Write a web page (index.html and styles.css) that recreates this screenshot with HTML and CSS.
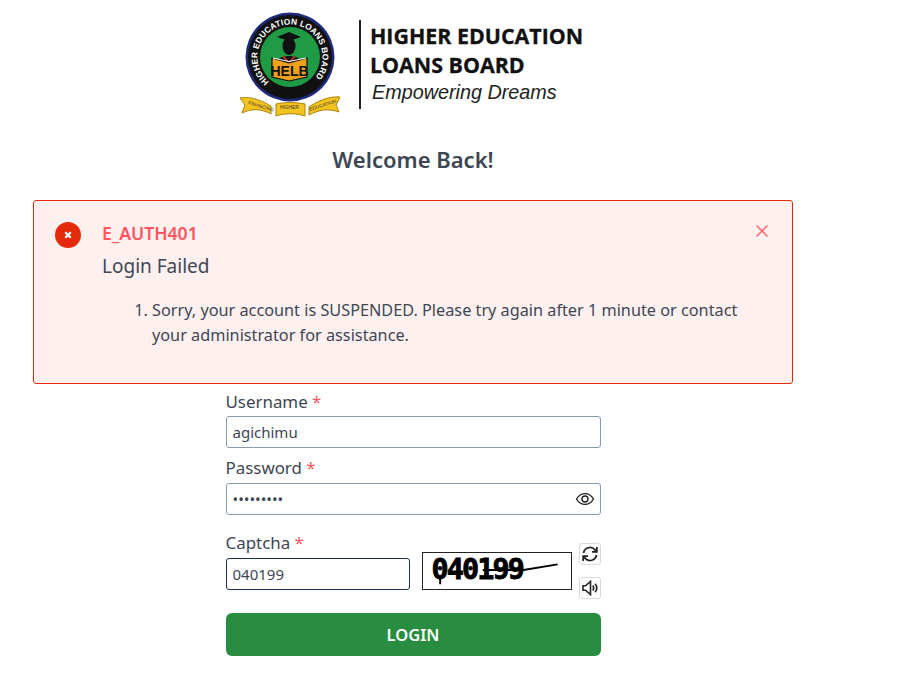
FILE: index.html
```html
<!DOCTYPE html>
<html lang="en">
<head>
    <meta charset="UTF-8">
    <meta name="viewport" content="width=device-width, initial-scale=1.0">
    <title>HELB Login</title>
    <link rel="stylesheet" href="styles.css">
</head>
<body>
<div class="page">
    <svg class="logo" width="350" height="120" viewBox="0 0 350 120" xmlns="http://www.w3.org/2000/svg">
        <defs>
            <path id="sealArc" d="M 29.1 81.9 A 32.5 32.5 0 1 1 70.9 81.9"/>
        </defs>
        <!-- seal -->
        <circle cx="50" cy="57" r="44.5" fill="#1f2a7a"/>
        <circle cx="50" cy="57" r="42" fill="#111"/>
        <circle cx="50" cy="57" r="30" fill="#1f9a45"/>
        <text class="seal-text" fill="#fff"><textPath href="#sealArc" textLength="152" lengthAdjust="spacing">HIGHER EDUCATION LOANS BOARD</textPath></text>
        <path d="M37 37 L49 32 L61 37 L49 41 Z" fill="#111"/>
        <ellipse cx="49" cy="46" rx="6.5" ry="9" fill="#111"/>
        <path d="M37 62 C39 54 59 54 61 62 L56 64 L49 68 L42 64 Z" fill="#111"/>
        <path d="M43 56 L49 63 L55 56" fill="none" stroke="#d8342c" stroke-width="1.6"/>
        <path d="M32 58 L49 63 L67 58 L67 77 L49 81 L32 77 Z" fill="#f0a11c" stroke="#111" stroke-width="1.2"/>
        <path d="M33 58 L49 61.5 L66 58" fill="none" stroke="#fff" stroke-width="1.2"/>
        <text class="seal-helb" x="49.5" y="76" text-anchor="middle">HELB</text>
        <!-- ribbon -->
        <path d="M0 98 C12 96 22 101 31 106 L31 114 C22 109 12 108 2 113 L5 105 Z" fill="#f5c31d" stroke="#a8840f" stroke-width="1"/>
        <path d="M36 104 C45 102 56 102 65 104 L65 116 C56 113 45 113 36 116 Z" fill="#f5c31d" stroke="#a8840f" stroke-width="1"/>
        <path d="M100 97 C89 96 78 101 69 107 L69 115 C78 110 88 108 99 112 L96 105 Z" fill="#f5c31d" stroke="#a8840f" stroke-width="1"/>
        <text class="ribbon-text" x="8" y="104" transform="rotate(17 8 104)">FINANCING</text>
        <text class="ribbon-text" x="40" y="109">HIGHER</text>
        <text class="ribbon-text" x="70" y="111" transform="rotate(-18 70 111)">EDUCATION</text>
        <!-- wordmark -->
        <rect x="119" y="20" width="2" height="89" fill="#222"/>
        <text class="logo-title" x="130" y="43.5">HIGHER EDUCATION</text>
        <text class="logo-title" x="130" y="72.5">LOANS BOARD</text>
        <text class="logo-tag" x="132" y="99">Empowering Dreams</text>
    </svg>

    <h1 class="welcome">Welcome Back!</h1>

    <div class="alert">
        <span class="alert-icon">
            <svg width="10" height="10" viewBox="0 0 10 10"><path d="M2.2 2.2 L7.8 7.8 M7.8 2.2 L2.2 7.8" stroke="#fff" stroke-width="2.2"/></svg>
        </span>
        <div class="alert-body">
            <div class="alert-code">E_AUTH401</div>
            <div class="alert-title">Login Failed</div>
            <ol class="alert-list">
                <li>Sorry, your account is SUSPENDED. Please try again after 1 minute or contact your administrator for assistance.</li>
            </ol>
        </div>
        <svg class="alert-close" width="14" height="14" viewBox="0 0 14 14"><path d="M1.5 1.5 L12.5 12.5 M12.5 1.5 L1.5 12.5" stroke="#ff5a5f" stroke-width="1.3"/></svg>
    </div>

    <form class="login-form">
        <label class="field-label" for="username">Username <span class="req">*</span></label>
        <input class="text-input" id="username" type="text" value="agichimu">

        <label class="field-label password-label" for="password">Password <span class="req">*</span></label>
        <div class="password-wrap">
            <input class="text-input" id="password" type="password" value="agichimu1">
            <svg class="eye" width="20" height="20" viewBox="0 0 20 20" fill="none" stroke="#222" stroke-width="1.4">
                <path d="M1.5 10 C4 5.8 7 4.6 10 4.6 C13 4.6 16 5.8 18.5 10 C16 14.2 13 15.4 10 15.4 C7 15.4 4 14.2 1.5 10 Z"/>
                <circle cx="10" cy="10" r="3"/>
            </svg>
        </div>

        <div class="captcha-row">
            <div class="captcha-field">
                <label class="field-label captcha-label" for="captcha">Captcha <span class="req">*</span></label>
                <input class="text-input captcha-input" id="captcha" type="text" value="040199">
            </div>
            <svg class="captcha-img" width="150" height="38" viewBox="0 0 150 38">
                <text class="captcha-digits" x="6" y="27">040199</text>
                <path d="M15 27 V33 M60 18 L103 18 L139 12" fill="none" stroke="#000" stroke-width="2"/>
            </svg>
            <div class="captcha-tools">
                <button class="tool-btn" type="button" aria-label="Refresh">
                    <svg width="18" height="18" viewBox="0 0 18 18" fill="none" stroke="#222" stroke-width="1.8">
                        <path d="M2.5 8 A6.6 6.6 0 0 1 14 4.8 L15.5 6.5"/>
                        <path d="M15.8 2 V6.8 H11"/>
                        <path d="M15.5 10 A6.6 6.6 0 0 1 4 13.2 L2.5 11.5"/>
                        <path d="M2.2 16 V11.2 H7"/>
                    </svg>
                </button>
                <button class="tool-btn" type="button" aria-label="Listen">
                    <svg width="18" height="18" viewBox="0 0 18 18" fill="none" stroke="#222" stroke-width="1.6">
                        <path d="M2 6.8 H4.5 L9.5 2.5 V15.5 L4.5 11.2 H2 Z"/>
                        <path d="M11.8 6.5 C12.9 8 12.9 10 11.8 11.5"/>
                        <path d="M14.2 4.8 C16 7.2 16 10.8 14.2 13.2"/>
                    </svg>
                </button>
            </div>
        </div>

        <button class="login-btn" type="button">LOGIN</button>
    </form>
</div>
</body>
</html>
```

FILE: styles.css
```css
html, body {
    margin: 0;
    padding: 0;
    background-color: #ffffff;
    font-family: "Noto Sans", sans-serif;
    color: #3d4654;
}

.page {
    width: 760px;
    margin-left: 33px;
    display: flex;
    flex-direction: column;
    align-items: center;
}

.logo {
    display: block;
    align-self: flex-start;
    margin-left: 207px;
}

.seal-text {
    font-family: "Liberation Sans", sans-serif;
    font-size: 8.4px;
    font-weight: bold;
}

.seal-helb {
    font-family: "Liberation Sans", sans-serif;
    font-size: 14px;
    font-weight: bold;
    fill: #111;
}

.ribbon-text {
    font-family: "Liberation Sans", sans-serif;
    font-size: 4.8px;
    fill: #333;
}

.logo-title {
    font-family: "Open Sans", sans-serif;
    font-size: 21.4px;
    font-weight: 700;
    fill: #111;
    stroke: #111;
    stroke-width: 0.3px;
}

.logo-tag {
    font-family: "Liberation Sans", sans-serif;
    font-size: 19.8px;
    font-style: italic;
    fill: #222;
}

.welcome {
    margin: 24px 0 26px;
    font-size: 22px;
    font-weight: 600;
    line-height: 30px;
    color: #3d4654;
}

.alert {
    box-sizing: border-box;
    width: 100%;
    height: 184px;
    display: flex;
    padding: 20px 23px 0 21px;
    background-color: #fff0f0;
    border: 1px solid #e42a0b;
    border-radius: 3px;
}

.alert-icon {
    flex: none;
    width: 26px;
    height: 26px;
    margin-top: 1px;
    border-radius: 50%;
    background-color: #e42a0b;
    display: flex;
    align-items: center;
    justify-content: center;
}

.alert-body {
    flex: 1;
    margin-left: 21px;
}

.alert-code {
    margin-top: -1px;
    font-size: 17.6px;
    font-weight: 600;
    line-height: 26px;
    color: #ff5560;
}

.alert-title {
    margin-top: 7px;
    font-size: 19px;
    line-height: 26px;
}

.alert-list {
    margin: 19px 0 0;
    padding-left: 50px;
    font-size: 16.25px;
    line-height: 25px;
}

.alert-close {
    flex: none;
    margin-top: 3px;
    margin-left: 16px;
}

.login-form {
    width: 375px;
    margin-top: 6px;
}

.field-label {
    display: block;
    font-size: 16.9px;
    line-height: 24px;
    margin-bottom: 2px;
}

.req {
    color: #ff5560;
}

.text-input {
    display: block;
    box-sizing: border-box;
    width: 100%;
    height: 32px;
    padding: 0 6px;
    border: 1px solid #8a9aae;
    border-radius: 3px;
    font-family: "Noto Sans", sans-serif;
    font-size: 15px;
    color: #3d4654;
    background-color: #ffffff;
}

.password-label {
    margin-top: 8px;
    margin-bottom: 3px;
}

.password-wrap {
    position: relative;
}

.eye {
    position: absolute;
    right: 6px;
    top: 6px;
}

.captcha-row {
    display: flex;
    margin-top: 16px;
    align-items: flex-start;
}

.captcha-field {
    width: 184px;
    flex: none;
}

.captcha-label {
    margin-bottom: 3px;
}

.captcha-input {
    border-color: #1c2f5c;
}

.captcha-img {
    flex: none;
    box-sizing: border-box;
    margin: 21px 0 0 12px;
    border: 1px solid #222;
}

.captcha-digits {
    font-family: "DejaVu Sans Mono", monospace;
    font-size: 30px;
    font-weight: bold;
    letter-spacing: -2px;
    fill: #000;
    stroke: #000;
    stroke-width: 0.9px;
}

.captcha-tools {
    display: flex;
    flex-direction: column;
    gap: 12px;
    margin: 12px 0 0 7px;
}

.tool-btn {
    width: 22px;
    height: 22px;
    padding: 0;
    border: 1px solid #d5dae0;
    border-radius: 3px;
    background-color: #ffffff;
    display: flex;
    align-items: center;
    justify-content: center;
}

.login-btn {
    display: block;
    width: 100%;
    height: 43px;
    margin-top: 14px;
    border: none;
    border-radius: 6px;
    background-color: #288d41;
    color: #ffffff;
    font-family: "Noto Sans", sans-serif;
    font-size: 16.5px;
    font-weight: 600;
}
```
